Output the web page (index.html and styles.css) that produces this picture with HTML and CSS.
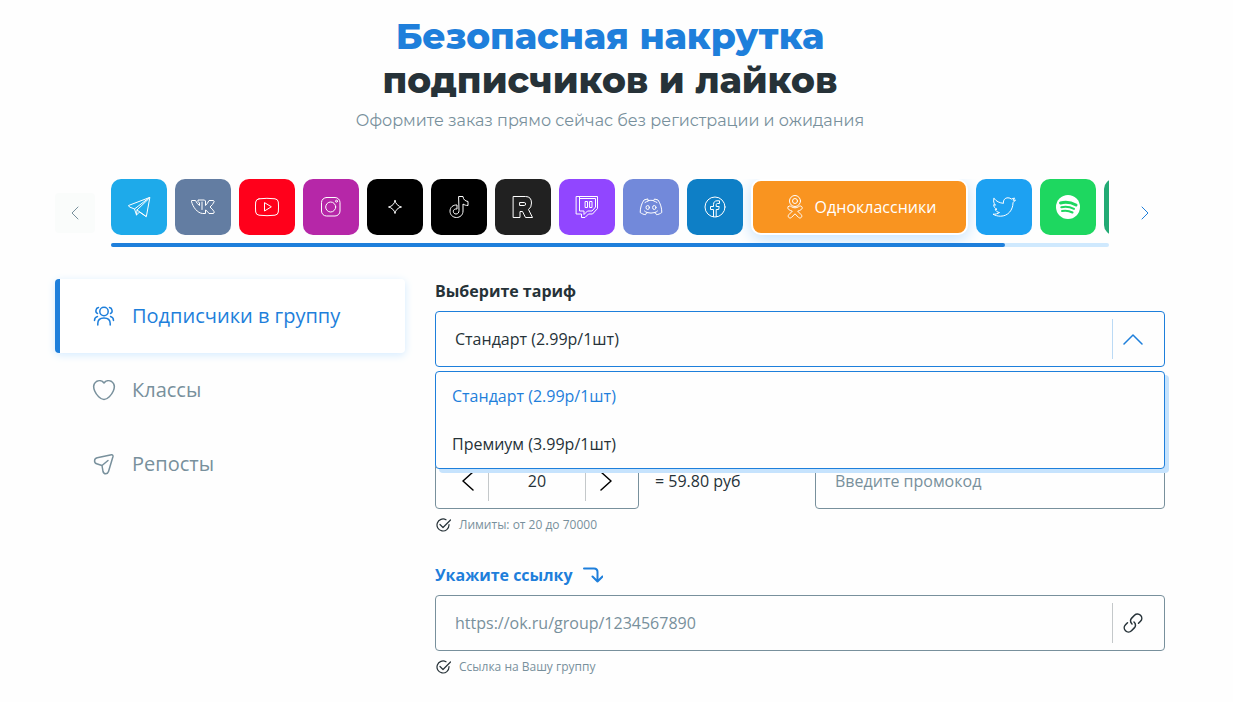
FILE: index.html
```html
<!DOCTYPE html>
<html lang="ru">
<head>
  <meta charset="UTF-8" />
  <meta name="viewport" content="width=device-width, initial-scale=1.0" />
  <title>Безопасная накрутка подписчиков и лайков</title>
  <link rel="stylesheet" href="styles.css">
</head>
<body>
  <main class="container">
    <header class="header">
      <h1><span>Безопасная накрутка</span><br />подписчиков и лайков</h1>
      <p>Оформите заказ прямо сейчас без регистрации и ожидания</p>
    </header>

    <section class="slider">
      <button class="arrow arrow-prev" type="button" aria-label="Назад" disabled>
        <svg width="8" height="14" viewBox="0 0 8 14"><path d="M7 1L1 7l6 6" /></svg>
      </button>

      <div class="slider-body">
        <div class="tiles">
          <button class="tile telegram" type="button" aria-label="Telegram">
            <svg width="24" height="24" viewBox="0 0 24 24"><path d="M22.500 2.500L1.500 10.500l1 1.500 5 2 2 6 3-3 6.500 4.500zM22.500 2.500L7.500 14M21.500 4L10 15l-.5 5M10 15l8.500 6" /></svg>
          </button>
          <button class="tile vk" type="button" aria-label="ВКонтакте">
            <svg width="24" height="24" viewBox="0 0 24 24"><path d="M1 5.500H4.500q1.500 3.500 4 5V8L7 6.500V5h6.500l1 1v4.500q2-2 3.500-5h4.500q1 .5.500 1.500-1 2.500-4 5 2.500 2 4 4.500.5 2-.8 2h-4.200q-1.500-2.500-3.500-3.500v3.500h-3C6.500 18 2 12.500.5 6.500zM11 7v7.500" /></svg>
          </button>
          <button class="tile youtube" type="button" aria-label="YouTube">
            <svg width="24" height="24" viewBox="0 0 24 24"><path d="M4 3.800Q12 2.800 20 3.800Q23 4.200 23.300 7Q23.800 12 23.300 17Q23 19.800 20 20.200Q12 21.200 4 20.200Q1 19.800.7 17Q.2 12 .7 7Q1 4.200 4 3.800zM9.500 8v8l6.500-4z" /></svg>
          </button>
          <button class="tile instagram" type="button" aria-label="Instagram">
            <svg width="24" height="24" viewBox="0 0 24 24"><rect x="2.500" y="2.500" width="18.500" height="18.500" rx="5" /><circle cx="11.700" cy="12" r="5" /><circle cx="17.500" cy="6.200" r="1" /></svg>
          </button>
          <button class="tile black" type="button" aria-label="Likee">
            <svg width="24" height="24" viewBox="0 0 24 24"><path d="M12 5.500c.3 3.200 3.500 6 6.500 6.500-3.500.5-6.200 3.300-6.500 6.500-.3-3.200-3.500-6-6.500-6.500 3.500-.5 6.200-3.300 6.500-6.500z" /></svg>
          </button>
          <button class="tile black" type="button" aria-label="TikTok">
            <svg width="24" height="24" viewBox="0 0 24 24"><path d="M12 1.500h4c.3 3 2 4.500 5 5v4c-2 0-3.500-.5-5-1.500v7c0 4-3 6.500-6.500 6.500-4 0-6.500-3-6.500-6.300 0-4 3.200-6.500 7-6.200V14c-2-.4-3.700.7-3.700 2.300 0 1.500 1 2.700 2.700 2.700 1.900 0 3-1.200 3-3.200z" /></svg>
          </button>
          <button class="tile rutube" type="button" aria-label="Rutube">
            <svg width="24" height="24" viewBox="0 0 24 24"><path d="M2.500 1.500H14.500Q20.500 1.500 20.500 8Q20.500 12.500 17.500 14.500L21.500 22.500H14.500L11.500 16.500H9V22.500H2.500zM9 7.500H13.500Q14.500 7.500 14.500 9T13.500 10.500H9z" /></svg>
          </button>
          <button class="tile twitch" type="button" aria-label="Twitch">
            <svg width="24" height="24" viewBox="0 0 24 24"><path d="M1.500 1.500h21v12L17.500 19h-4L10 22.500H6.500V19H1.500zM4.500 1.500V16h4.500v3.500l3.500-3.500h4.500l3.500-4V3.500H4.500M10.500 6.500h2v6h-2zM15 6.500h2v6h-2z" /></svg>
          </button>
          <button class="tile discord" type="button" aria-label="Discord">
            <svg width="24" height="24" viewBox="0 0 24 24"><path d="M8.500 4L5 5C2.500 8.500 1.200 13 1.200 17.500c1.800 1.300 3.500 2 5.300 2.200l1.300-2.200q4.200 1.200 8.400 0l1.300 2.200c1.800-.2 3.500-.9 5.300-2.200 0-4.500-1.300-9-3.800-12.500L15.500 4l-.8 1.500q-2.700-.4-5.400 0zM5.500 16q1 1 2.500 1.500M18.500 16q-1 1-2.500 1.500M6 7.500q1.500-1 3.300-1.500M18 7.500q-1.500-1-3.300-1.500" /><ellipse cx="8.700" cy="12.500" rx="1.700" ry="2" /><ellipse cx="15.300" cy="12.500" rx="1.700" ry="2" /></svg>
          </button>
          <button class="tile facebook" type="button" aria-label="Facebook">
            <svg width="24" height="24" viewBox="0 0 24 24"><circle cx="12" cy="12" r="10" /><path d="M10.500 21.800V14.500H7.500v-3h3V9.500c0-2.500 1.500-3.700 3.500-3.700h2.500v2.700h-2c-1 0-1.300.6-1.300 1.500v1.500h3l-.5 3h-2.500v7.300" /></svg>
          </button>
          <button class="tile tile-active" type="button">
            <svg width="24" height="24" viewBox="0 0 24 24"><circle cx="12" cy="6" r="5.500" /><circle cx="12" cy="6" r="2.500" /><path d="M5.200 11.700c1-1.200 2.200-.8 3.200 0 2.200 1.500 5 1.500 7.200 0 1-.8 2.200-1.200 3.200 0 .9 1.200.3 2.300-.8 3-1 .7-2.200 1.200-3.300 1.500l3.500 3.500c.8.800.8 1.900.1 2.700-.8.800-2 .8-2.800 0L12 18.800l-3.500 3.600c-.8.800-2 .8-2.800 0-.7-.8-.7-1.900.1-2.700l3.500-3.500c-1.100-.3-2.300-.8-3.300-1.500-1.100-.7-1.700-1.800-.8-3z" /></svg>
            Одноклассники
          </button>
          <button class="tile twitter" type="button" aria-label="Twitter">
            <svg width="24" height="24" viewBox="0 0 24 24"><path d="M2 3.500c2.500 3 5.500 4.500 9.500 4.800C11 5 13 2.800 16 2.800c1.500 0 2.500.5 3.300 1.300L22.500 3l-1.300 2.300L23.500 5 21 7.700C21 15 16 21.200 8.500 21.200c-3 0-5.500-.8-7.500-2 2.500.2 4.700-.4 6.500-1.700-2-.2-3.700-1.300-4.300-3.200h1.800c-2-.8-3.300-2.500-3.300-4.600l1.800.5C1.700 8.500 1 5.700 2 3.500z" /></svg>
          </button>
          <button class="tile spotify" type="button" aria-label="Spotify">
            <svg width="24" height="24" viewBox="0 0 24 24"><circle cx="12" cy="12" r="12" class="disc" /><path d="M4.500 8q8-2 15.500 2" class="wave wave-big" /><path d="M5.300 12.200q6.500-1.600 12.700 1.700" class="wave" /><path d="M6 16q5.500-1.200 10.500 1.500" class="wave" /></svg>
          </button>
          <button class="tile green" type="button" aria-label="Другие сети"></button>
        </div>
        <div class="track"><div class="track-fill"></div></div>
      </div>

      <button class="arrow arrow-next" type="button" aria-label="Вперёд">
        <svg width="8" height="14" viewBox="0 0 8 14"><path d="M1 1l6 6-6 6" /></svg>
      </button>
    </section>

    <div class="order">
      <nav class="services">
        <a class="service service-active" href="#">
          <svg width="24" height="24" viewBox="0 0 24 24"><circle cx="12" cy="7.500" r="4.200" /><path d="M5.800 21v-1.500c0-3.500 2.500-5.500 6.200-5.500s6.200 2 6.200 5.500V21M6.500 3.500C3.500 4 3 8.500 5.500 9.500M17.500 3.500c3 .5 3.500 5 1 6M5.500 12.500c-2 .5-3 2-3 4M18.500 12.500c2 .5 3 2 3 4" /></svg>
          Подписчики в группу
        </a>
        <a class="service" href="#">
          <svg width="24" height="24" viewBox="0 0 24 24"><path d="M12 5C10.200 2.600 6.800 2.200 4.400 3.500 1.500 5.500 1.200 9.500 2.700 13c1.700 4 5.800 8.500 9.300 8.500s7.600-4.500 9.300-8.500c1.500-3.500 1.200-7.500-1.700-9.500-2.400-1.300-5.800-.9-7.600 1.500z" /></svg>
          Классы
        </a>
        <a class="service" href="#">
          <svg width="24" height="24" viewBox="0 0 24 24"><path d="M19.500 2.800L5.200 5.800c-3.400.9-3.400 4.900-.6 5.900L10 13.500l1 6c.8 3 4.600 3 5.500 0L21 4.500c.2-1-.5-1.900-1.500-1.700zM10 13.500l6-5" /></svg>
          Репосты
        </a>
      </nav>

      <form class="form">
        <label class="label" for="tariff">Выберите тариф</label>
        <div class="field tariff">
          <select id="tariff">
            <option>Стандарт (2.99р/1шт)</option>
            <option>Премиум (3.99р/1шт)</option>
          </select>
          <span class="addon">
            <svg width="20" height="12" viewBox="0 0 20 12"><path d="M1 11l9-9 9 9" /></svg>
          </span>
          <div class="menu">
            <button class="menu-item selected" type="button">Стандарт (2.99р/1шт)</button>
            <button class="menu-item" type="button">Премиум (3.99р/1шт)</button>
          </div>
        </div>

        <div class="row">
          <div>
            <div class="amount">
              <div class="field counter">
                <button type="button" id="minus" aria-label="Меньше">
                  <svg width="12" height="20" viewBox="0 0 12 20"><path d="M11 1L1 10l10 9" /></svg>
                </button>
                <input type="text" id="count" value="20" aria-label="Количество" />
                <button type="button" id="plus" aria-label="Больше">
                  <svg width="12" height="20" viewBox="0 0 12 20"><path d="M1 1l10 9-10 9" /></svg>
                </button>
              </div>
              <output for="count">= 59.80 руб</output>
            </div>
            <p class="hint">
              <svg width="16" height="16" viewBox="0 0 16 16"><path d="M14 7.500v.5a6 6 0 1 1-3-5.200M5 7.500l3 3L15.500 3" /></svg>
              Лимиты: от 20 до 70000
            </p>
          </div>
          <div class="field">
            <input type="text" id="promo" placeholder="Введите промокод" aria-label="Промокод" />
          </div>
        </div>

        <label class="label label-link" for="link">
          Укажите ссылку
          <svg width="20" height="16" viewBox="0 0 20 16"><path d="M1 1.500h10q3.500 0 3.500 3.500v9.500M9.500 9.500l5 5 5-5" /></svg>
        </label>
        <div class="field">
          <input type="url" id="link" placeholder="https://ok.ru/group/1234567890" />
          <span class="addon">
            <svg width="20" height="20" viewBox="0 0 20 20"><path d="M9 11c-2.200-2-1.700-4.500-.3-5.900l2.800-2.800c1.800-1.800 4.400-1.600 6 0s1.800 4.200 0 6l-2 2M11 9c2.200 2 1.700 4.500.3 5.900l-2.800 2.800c-1.800 1.800-4.400 1.600-6 0s-1.800-4.200 0-6l2-2" /></svg>
          </span>
        </div>
        <p class="hint">
          <svg width="16" height="16" viewBox="0 0 16 16"><path d="M14 7.500v.5a6 6 0 1 1-3-5.200M5 7.500l3 3L15.500 3" /></svg>
          Ссылка на Вашу группу
        </p>
      </form>
    </div>
  </main>
</body>
</html>
```
FILE: styles.css
```css
* { box-sizing: border-box; }
body { margin: 0; padding-right: 13px; background: #fefefe; color: #263238; font: 16px/24px "Open Sans", sans-serif; }
button, input, select { font: inherit; color: inherit; margin: 0; border: none; background: none; }
button { padding: 0; cursor: pointer; }
svg { flex: none; fill: none; stroke: currentColor; stroke-linecap: round; stroke-linejoin: round; }
p { margin: 0; }

.container { max-width: 1110px; margin: 0 auto; }

.header { padding-top: 14px; text-align: center; font-family: Montserrat, Inter, sans-serif; }
.header h1 { margin: 0; font-size: 36px; line-height: 44px; font-weight: 800; }
.header h1 span { color: #1e7fdb; }
.header p { margin-top: 7px; color: #78909c; }

/* slider */
.slider { display: flex; gap: 16px; margin-top: 46px; }
.slider-body { flex: 1; min-width: 0; overflow: hidden; }
.tiles { display: flex; gap: 8px; isolation: isolate; }
.tile { flex: none; display: flex; align-items: center; justify-content: center; width: 56px; height: 56px; border-radius: 10px; color: white; }
.tile-active { z-index: -1; width: 217px; gap: 8px; background: #f99420; border: 2px solid white; box-shadow: 0 4px 16px #c4e2fc; }
.telegram { background: #1eaaea; }
.vk { background: #637da2; }
.youtube { background: #ff001b; }
.instagram { background: #b627a8; }
.black { background: black; }
.rutube { background: #212121; }
.twitch { background: #9146ff; }
.discord { background: #7289da; }
.facebook { background: #0e7fc6; }
.twitter { background: #1da1f2; }
.spotify { background: #1ed760; }
.green { background: #22aa74; }
.disc { fill: white; stroke: none; }
.wave { stroke: #1ed760; stroke-width: 2; }
.wave-big { stroke-width: 3; }
.track { position: relative; height: 4px; margin-top: 8px; border-radius: 2px; background: #cfe9fe; }
.track-fill { width: 89.6%; height: 4px; border-radius: 2px; background: #1e7fdb; }
.arrow { flex: none; display: flex; align-items: center; justify-content: center; width: 40px; height: 40px; margin-top: 14px; border-radius: 4px; color: #1e7fdb; }
.arrow-prev { color: #78909c; background: #fafcfb; }

/* order */
.order { display: flex; gap: 30px; margin-top: 32px; }
.services { width: 350px; }
.service { display: flex; align-items: center; gap: 16px; height: 74px; padding-left: 32px; border-left: 5px solid transparent; border-radius: 4px; color: #78909c; font-size: 20px; text-decoration: none; }
.service-active { color: #1e7fdb; background: white; border-left-color: #1e7fdb; box-shadow: 0 2px 8px #d4ebff; }
.service svg { stroke-width: 1.5; }

.form { flex: 1; min-width: 0; }
.label { display: flex; align-items: center; gap: 10px; margin-bottom: 8px; font-weight: bold; }
.label-link { margin-top: 30px; color: #1e7fdb; }
.label-link svg { stroke-width: 2; }
.field { display: flex; align-items: center; height: 56px; border: 1px solid #78909c; border-radius: 4px; background: #fefefe; }
.field input, .field select { flex: 1; min-width: 0; height: 54px; padding: 0 19px; outline: none; appearance: none; }
.field input::placeholder { color: #78909c; opacity: 1; }
.addon { display: flex; align-items: center; width: 52px; height: 40px; padding-left: 10px; border-left: 1px solid #c4c8ca; }
.addon svg { stroke-width: 1.5; }
.tariff { position: relative; border-color: #1e7fdb; }
.tariff .addon { color: #1e7fdb; border-color: #bbdaf5; }
.menu { position: absolute; z-index: 1; top: 59px; left: -1px; right: -1px; border: 1px solid #1e7fdb; border-radius: 4px; background: #fefefe; box-shadow: 4px 4px 0 #c6e3fd; }
.menu-item { display: block; width: 100%; height: 48px; padding: 0 16px; text-align: left; }
.selected { color: #1e7fdb; }

.row { display: grid; grid-template-columns: 1fr 1fr; gap: 30px; margin-top: 86px; }
.amount { display: flex; align-items: center; gap: 16px; }
.counter { width: 204px; padding: 0 12px; }
.field.counter input { height: 40px; padding: 0; text-align: center; border: solid #c4c8ca; border-width: 0 1px; }
.counter button { display: flex; align-items: center; justify-content: center; width: 40px; height: 40px; color: black; }
.counter svg { stroke-width: 1.5; }
.hint { display: flex; align-items: center; gap: 8px; margin-top: 8px; color: #78909c; font-size: 12px; line-height: 16px; }
.hint svg { color: #263238; stroke-width: 1.2; }
```
